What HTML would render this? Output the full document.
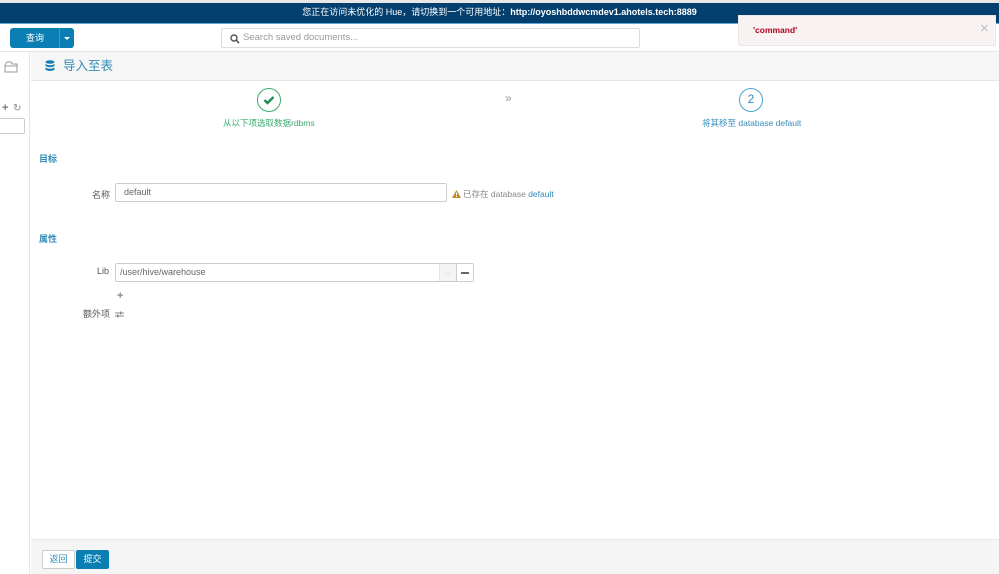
<!DOCTYPE html>
<html><head><meta charset="utf-8">
<style>
*{box-sizing:border-box;margin:0;padding:0}
body{width:999px;height:574px;overflow:hidden;background:#fff;font-family:"Liberation Sans","Noto Sans CJK SC",sans-serif;font-size:9px;color:#333;position:relative}
.abs{position:absolute}
span.abs{line-height:11px}
</style></head><body>
<div class="abs" style="left:0;top:0;width:999px;height:3px;background:#e8e8e8"></div>
<div class="abs" style="left:0;top:3px;width:999px;height:20px;background:#03406f;color:#fff;text-align:center;line-height:19px;font-size:9px">您正在访问未优化的 Hue，请切换到一个可用地址：<b>http://oyoshbddwcmdev1.ahotels.tech:8889</b></div>
<div class="abs" style="left:0;top:23px;width:999px;height:1px;background:#5ea8d8"></div>
<div class="abs" style="left:0;top:24px;width:999px;height:28px;background:#fff;border-bottom:1px solid #e5e5e5"></div>
<div class="abs" style="left:10px;top:28px;width:64px;height:20px;background:#0b7fb3;border-radius:3px;color:#fff;font-size:9px;line-height:20px">
 <span style="position:absolute;left:16px;top:0;line-height:20px">查询</span>
 <span style="position:absolute;left:49px;top:0;width:1px;height:20px;background:#3a9ac6"></span>
 <span style="position:absolute;left:54px;top:9px;width:0;height:0;border-left:3px solid transparent;border-right:3px solid transparent;border-top:3px solid #fff"></span>
</div>
<div class="abs" style="left:221px;top:28px;width:419px;height:20px;border:1px solid #ddd;border-radius:2px;background:#fff">
 <svg class="abs" style="left:8px;top:5px" width="10" height="10" viewBox="0 0 10 10"><circle cx="4" cy="4" r="3" fill="none" stroke="#555" stroke-width="1.4"/><line x1="6.2" y1="6.2" x2="9" y2="9" stroke="#555" stroke-width="1.6"/></svg>
 <span class="abs" style="left:21px;top:3px;color:#999;font-size:9.5px">Search saved documents...</span>
</div>
<div class="abs" style="left:738px;top:15px;width:258px;height:31px;background:#f9f2f2;border:1px solid #efe6e6">
 <span class="abs" style="left:14px;top:9px;color:#b0001c;font-size:8.5px;font-weight:bold">'command'</span>
 <span class="abs" style="left:241px;top:4px;color:#bbb;font-size:15px;line-height:18px">×</span>
</div>
<div class="abs" style="left:0;top:52px;width:30px;height:522px;background:#fff;border-right:1px solid #e5e5e5"></div>
<svg class="abs" style="left:4px;top:61px" width="15" height="12" viewBox="0 0 15 12"><path d="M1 4 L3 1 H7 L8 3 H13 V11 H1 Z M1 5 H13" fill="none" stroke="#999" stroke-width="1"/></svg>
<span class="abs" style="left:2px;top:103px;color:#777;font-size:11px;font-weight:bold">+</span>
<span class="abs" style="left:13px;top:103px;color:#888;font-size:10px">↻</span>
<div class="abs" style="left:-2px;top:118px;width:27px;height:16px;border:1px solid #ccc;background:#fff;border-radius:2px"></div>
<div class="abs" style="left:31px;top:52px;width:968px;height:29px;background:#f6f6f6;border-bottom:1px solid #e5e5e5"></div>
<svg class="abs" style="left:45px;top:60px" width="10" height="12" viewBox="0 0 10 12"><ellipse cx="5" cy="2" rx="4.5" ry="1.8" fill="#1a7fb0"/><path d="M0.5 4 Q5 6.5 9.5 4 V6 Q5 8.5 0.5 6Z M0.5 7.5 Q5 10 9.5 7.5 V9.8 Q5 12.3 0.5 9.8Z" fill="#1a7fb0"/></svg>
<span class="abs" style="left:63px;top:59px;font-size:12.5px;line-height:14px;color:#338bb8">导入至表</span>
<div class="abs" style="left:257px;top:88px;width:24px;height:24px;border:1.5px solid #3aaa6c;border-radius:50%"></div>
<svg class="abs" style="left:263px;top:95px" width="12" height="10" viewBox="0 0 12 10"><path d="M1.5 5 L4.5 8 L10.5 2" fill="none" stroke="#1e8c4e" stroke-width="2.4"/></svg>
<span class="abs" style="left:223px;top:118px;color:#3aaa6c;font-size:8.5px">从以下项选取数据rdbms</span>
<span class="abs" style="left:505px;top:93px;color:#999;font-size:12px">»</span>
<div class="abs" style="left:739px;top:88px;width:24px;height:24px;border:1.5px solid #4ba3cf;border-radius:50%;color:#338bb8;text-align:center;line-height:21px;font-size:12px">2</div>
<span class="abs" style="left:702px;top:118px;color:#338bb8;font-size:8.5px">将其移至 database default</span>
<span class="abs" style="left:39px;top:154px;color:#338bb8;font-size:9px;font-weight:bold">目标</span>
<span class="abs" style="left:92px;top:190px;color:#555;font-size:9px">名称</span>
<div class="abs" style="left:115px;top:183px;width:332px;height:19px;border:1px solid #ccc;border-radius:2px;color:#666;padding:3px 0 0 8px;font-size:9px">default</div>
<svg class="abs" style="left:452px;top:190px" width="9" height="8" viewBox="0 0 9 8"><path d="M4.5 0 L9 8 H0Z" fill="#c08a2e"/><rect x="4" y="2.5" width="1" height="3" fill="#fff"/><rect x="4" y="6" width="1" height="1" fill="#fff"/></svg>
<span class="abs" style="left:463px;top:189px;color:#888;font-size:8.5px">已存在 database <span style="color:#338bb8">default</span></span>
<span class="abs" style="left:39px;top:234px;color:#338bb8;font-size:9px;font-weight:bold">属性</span>
<span class="abs" style="left:97px;top:266px;color:#555;font-size:9px">Lib</span>
<div class="abs" style="left:115px;top:263px;width:359px;height:19px;border:1px solid #ccc;border-radius:2px;color:#666;font-size:9px">
 <span class="abs" style="left:4px;top:3px">/user/hive/warehouse</span>
 <div class="abs" style="left:323px;top:0;width:17px;height:17px;background:#f4f4f4;border-left:1px solid #e5e5e5;color:#aaa;text-align:center;line-height:17px;font-size:7px">..</div>
 <div class="abs" style="left:340px;top:0;width:17px;height:17px;border-left:1px solid #ccc;background:#fff"><span class="abs" style="left:4px;top:8px;width:8px;height:1.5px;background:#666"></span></div>
</div>
<span class="abs" style="left:117px;top:291px;color:#888;font-size:11px;font-weight:bold">+</span>
<span class="abs" style="left:83px;top:309px;color:#555;font-size:9px">额外项</span>
<svg class="abs" style="left:115px;top:311px" width="9" height="7" viewBox="0 0 9 7"><path d="M0 2H9M0 5H9" stroke="#888" stroke-width="1"/><rect x="5" y="0.5" width="1.5" height="3" fill="#888"/><rect x="2" y="3.5" width="1.5" height="3" fill="#888"/></svg>
<div class="abs" style="left:31px;top:539px;width:968px;height:35px;background:#f5f5f5;border-top:1px solid #e8e8e8"></div>
<div class="abs" style="left:42px;top:550px;width:33px;height:19px;border:1px solid #ccc;border-radius:2px;background:#fff;color:#338bb8;text-align:center;line-height:17px;font-size:9px">返回</div>
<div class="abs" style="left:76px;top:550px;width:33px;height:19px;border-radius:2px;background:#0b7fb3;color:#fff;text-align:center;line-height:19px;font-size:9px">提交</div>
</body></html>
